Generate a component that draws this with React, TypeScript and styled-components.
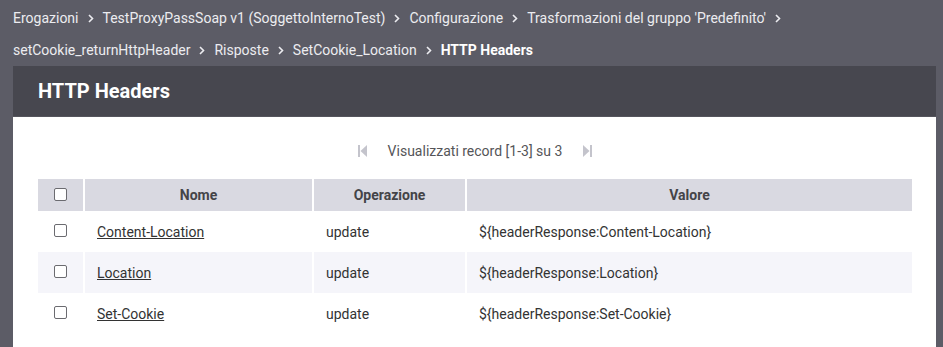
import React from 'react';
import styled, { createGlobalStyle } from 'styled-components';

const GlobalStyle = createGlobalStyle`
  html, body {
    margin: 0;
    padding: 0;
    background: #5c5c66;
    font-family: Roboto, "Liberation Sans", sans-serif;
    height: 100%;
  }
`;

const Page = styled.div`
  background: #5c5c66;
  min-height: 347px;
  padding: 2px 7px 0 13px;
`;

const Crumbs = styled.div`
  display: flex;
  flex-wrap: wrap;
  align-items: center;
  font-size: 14px;
  line-height: 32px;
  color: #ececf0;
`;

const Crumb = styled.span<{ $current?: boolean }>`
  font-weight: ${p => (p.$current ? 700 : 400)};
  color: ${p => (p.$current ? '#ffffff' : '#ececf0')};
  white-space: nowrap;
`;

const Sep = styled.span`
  display: inline-flex;
  align-items: center;
  margin: 0 9px 0 9px;
`;

const Panel = styled.div`
  background: #ffffff;
`;

const PanelHeader = styled.div`
  background: #47474f;
  height: 50px;
  display: flex;
  align-items: center;
  padding-left: 25px;
  border-bottom: 1px solid #55555d;
  font-size: 20px;
  font-weight: 700;
  color: #ffffff;
`;

const PanelBody = styled.div`
  padding: 19px 24px 16px 25px;
`;

const Pager = styled.div`
  display: flex;
  justify-content: center;
  align-items: center;
  gap: 21px;
  height: 30px;
  margin-bottom: 13px;
  font-size: 14px;
  color: #555558;
`;

const Table = styled.table`
  width: 100%;
  border-collapse: collapse;
  font-size: 14px;
  color: #333333;
`;

const Th = styled.th<{ $w?: number }>`
  background: #d9d9e1;
  height: 32px;
  font-weight: 700;
  color: #444448;
  text-align: center;
  border-left: 2px solid #ffffff;
  width: ${p => (p.$w ? `${p.$w}px` : 'auto')};
  padding: 0;
  &:first-child {
    border-left: none;
  }
`;

const Row = styled.tr<{ $alt?: boolean }>`
  background: ${p => (p.$alt ? '#f5f5fa' : '#ffffff')};
`;

const Td = styled.td<{ $check?: boolean }>`
  height: 41px;
  padding: 0 0 0 ${p => (p.$check ? '0' : '12px')};
  text-align: ${p => (p.$check ? 'center' : 'left')};
  border-left: 2px solid #ffffff;
  &:first-child {
    border-left: none;
  }
`;

const Box = styled.span`
  display: inline-block;
  width: 11px;
  height: 11px;
  border: 1px solid #6b6b70;
  border-radius: 2px;
  background: #ffffff;
  vertical-align: middle;
  margin-top: -4px;
`;

const Link = styled.a`
  color: #333333;
  text-decoration: underline;
  cursor: pointer;
`;

const Chevron = () => (
  <svg width="6" height="9" viewBox="0 0 6 9">
    <path d="M1 1l3.5 3.5L1 8" fill="none" stroke="#ececf0" strokeWidth="1.6" />
  </svg>
);

const First = () => (
  <svg width="9" height="12" viewBox="0 0 9 12">
    <rect x="0" y="0" width="2" height="12" fill="#c4c4cc" />
    <path d="M9 0L2.5 6L9 12z" fill="#c4c4cc" />
  </svg>
);

const Last = () => (
  <svg width="9" height="12" viewBox="0 0 9 12">
    <rect x="7" y="0" width="2" height="12" fill="#c4c4cc" />
    <path d="M0 0L6.5 6L0 12z" fill="#c4c4cc" />
  </svg>
);

const crumbs = [
  'Erogazioni',
  'TestProxyPassSoap v1 (SoggettoInternoTest)',
  'Configurazione',
  "Trasformazioni del gruppo 'Predefinito'",
  'setCookie_returnHttpHeader',
  'Risposte',
  'SetCookie_Location',
];

const rows = [
  { nome: 'Content-Location', op: 'update', valore: '${headerResponse:Content-Location}' },
  { nome: 'Location', op: 'update', valore: '${headerResponse:Location}' },
  { nome: 'Set-Cookie', op: 'update', valore: '${headerResponse:Set-Cookie}' },
];

const App = () => {
  return (
    <>
      <GlobalStyle />
      <Page>
        <Crumbs>
          {crumbs.map((c, i) => (
            <React.Fragment key={i}>
              <Crumb>{c}</Crumb>
              <Sep>
                <Chevron />
              </Sep>
            </React.Fragment>
          ))}
          <Crumb $current>HTTP Headers</Crumb>
        </Crumbs>
        <Panel>
          <PanelHeader>HTTP Headers</PanelHeader>
          <PanelBody>
            <Pager>
              <First />
              <span>Visualizzati record [1-3] su 3</span>
              <Last />
            </Pager>
            <Table>
              <thead>
                <tr>
                  <Th $w={45}>
                    <Box />
                  </Th>
                  <Th $w={227}>Nome</Th>
                  <Th $w={151}>Operazione</Th>
                  <Th>Valore</Th>
                </tr>
              </thead>
              <tbody>
                {rows.map((r, i) => (
                  <Row key={r.nome} $alt={i % 2 === 1}>
                    <Td $check>
                      <Box />
                    </Td>
                    <Td>
                      <Link>{r.nome}</Link>
                    </Td>
                    <Td>{r.op}</Td>
                    <Td>{r.valore}</Td>
                  </Row>
                ))}
              </tbody>
            </Table>
          </PanelBody>
        </Panel>
      </Page>
    </>
  );
};

export default App;
